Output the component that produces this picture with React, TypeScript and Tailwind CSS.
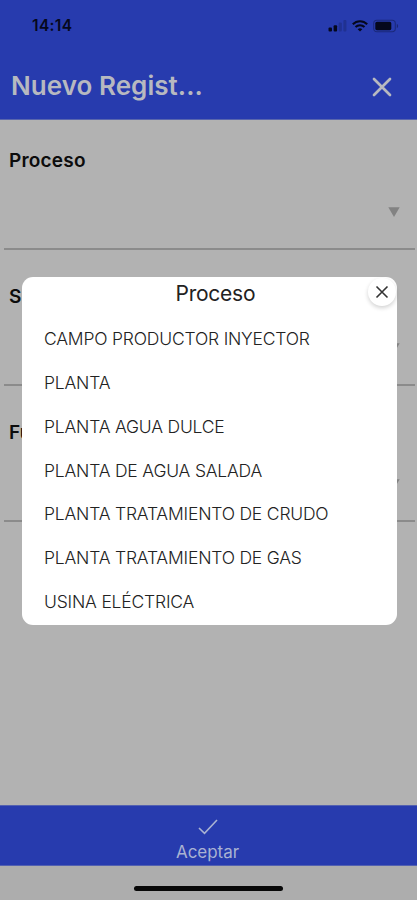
const fields = ["Proceso", "Subproceso", "Función"];

const options = [
  "CAMPO PRODUCTOR INYECTOR",
  "PLANTA",
  "PLANTA AGUA DULCE",
  "PLANTA DE AGUA SALADA",
  "PLANTA TRATAMIENTO DE CRUDO",
  "PLANTA TRATAMIENTO DE GAS",
  "USINA ELÉCTRICA",
];

function StatusBar() {
  return (
    <div className="flex h-[51px] items-center justify-between pr-[18px] pl-8 text-[#05081c]">
      <span className="text-[15.5px] font-semibold tracking-[0.35px]">14:14</span>
      <div className="flex items-center gap-[5px]">
        <svg width="19" height="14" viewBox="0 0 19 14" fill="currentColor">
          <rect x="0.5" y="8.5" width="3.5" height="4" rx="1" />
          <rect x="5.6" y="6.2" width="3.5" height="6.3" rx="1" />
          <rect x="10.7" y="3.6" width="3.1" height="8.9" rx="1" opacity="0.2" />
          <rect x="15.4" y="1" width="3" height="11.5" rx="1" opacity="0.2" />
        </svg>
        <svg width="16" height="14" viewBox="0 0 16 14" fill="none" stroke="currentColor" strokeWidth="2">
          <path d="M0.8 5.3C4.8 1.1 11.2 1.1 15.2 5.3" />
          <path d="M3.5 8C6 5.5 10 5.5 12.5 8" />
          <path d="M5.7 10.2C7 9 9 9 10.3 10.2L8 12.6Z" fill="currentColor" stroke="none" />
        </svg>
        <svg width="26" height="14" viewBox="0 0 26 14">
          <rect x="0.7" y="1.2" width="21.6" height="11.6" rx="3.2" fill="none" stroke="currentColor" strokeWidth="1.1" opacity="0.35" />
          <rect x="2.3" y="2.8" width="16" height="8.4" rx="1.6" fill="currentColor" />
          <path d="M23.8 4.8C25.6 5.6 25.6 8.4 23.8 9.2Z" fill="currentColor" opacity="0.4" />
        </svg>
      </div>
    </div>
  );
}

function Field({ label }: { label: string }) {
  return (
    <section className="flex h-[136px] flex-col border-b-2 border-[#8b8b8b] px-[5px]">
      <h2 className="mt-[35px] text-[19px] leading-6 font-semibold tracking-[0.2px] text-[#0c0c0c]">{label}</h2>
      <svg className="mt-[34px] mr-[10px] self-end" width="12" height="10" viewBox="0 0 12 10">
        <path d="M0.3 0.3H11.7L6 10Z" fill="#828282" />
      </svg>
    </section>
  );
}

export default function App() {
  return (
    <div className="relative flex h-[900px] w-[417px] flex-col overflow-hidden bg-[#b2b2b2] font-['Inter',sans-serif]">
      <header className="h-[120px] shrink-0 border-b border-[#5966ad] bg-[#273bae]">
        <StatusBar />
        <div className="flex h-[69px] items-center justify-between pr-[25px] pl-[11px] text-[#b7b9c0]">
          <h1 className="text-[26px] leading-8 font-semibold tracking-[0.05px]">Nuevo Regist...</h1>
          <svg className="mt-[2px]" width="20" height="20" viewBox="0 0 20 20" fill="none" stroke="currentColor" strokeWidth="2.7" strokeLinecap="round">
            <path d="M2 2L18 18M18 2L2 18" />
          </svg>
        </div>
      </header>

      <main className="-mt-[6px] flex-1 pr-[2px] pl-1">
        {fields.map((label) => (
          <Field key={label} label={label} />
        ))}
      </main>

      <button className="flex h-[61px] w-full shrink-0 flex-col items-center border-y border-[#5361b0] bg-[#273bae] pr-[2px] text-[#a9b2d2]">
        <svg className="mt-[13px]" width="20" height="16" viewBox="0 0 20 16" fill="none" stroke="currentColor" strokeWidth="1.6">
          <path d="M1 9L6.5 14.3L19 1" />
        </svg>
        <span className="mt-[7px] text-[17px] leading-5 tracking-[-0.05px]">Aceptar</span>
      </button>
      <footer className="flex h-[34px] shrink-0 justify-center bg-[#adadad]">
        <div className="mt-5 h-[5px] w-[149px] rounded-full bg-[#080808]" />
      </footer>

      <div
        role="dialog"
        className="absolute top-[276.5px] left-[21.5px] h-[348px] w-[375px] rounded-[11px] bg-white"
      >
        <h2 className="ml-[154px] pt-[3px] text-[21px] leading-[27px] tracking-[-0.25px] text-[#222]">Proceso</h2>
        <ul className="mt-[11px] ml-[22.5px] text-[17.5px] tracking-[-0.19px] text-[#222]">
          {options.map((option) => (
            <li key={option} className="flex h-[43.8px] items-center font-light whitespace-nowrap">
              {option}
            </li>
          ))}
        </ul>
        <button className="absolute top-[1px] right-[1px] flex size-7 items-center justify-center rounded-full bg-white shadow-[0_2px_4px_rgba(0,0,0,0.18)]">
          <svg width="14" height="14" viewBox="0 0 14 14" fill="none" stroke="#333" strokeWidth="1.6">
            <path d="M1.5 1.5L12.5 12.5M12.5 1.5L1.5 12.5" />
          </svg>
        </button>
      </div>
    </div>
  );
}
